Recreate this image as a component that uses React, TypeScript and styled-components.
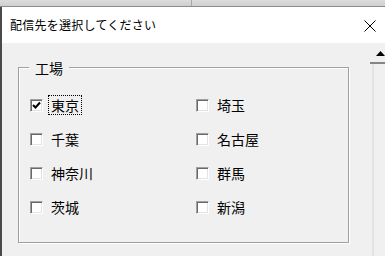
import React from "react";
import styled, { createGlobalStyle } from "styled-components";

const GlobalStyle = createGlobalStyle`
    html, body {
        margin: 0;
        padding: 0;
        background: #f0f0f0;
    }
    body {
        font-family: "Noto Sans CJK JP", "Noto Sans", sans-serif;
        color: #000;
    }
`;

const factories = [
    { name: "東京", checked: true, focused: true },
    { name: "埼玉" },
    { name: "千葉" },
    { name: "名古屋" },
    { name: "神奈川" },
    { name: "群馬" },
    { name: "茨城" },
    { name: "新潟" }
];

const App = () => {
    return (
        <>
            <GlobalStyle />
            <Screen>
                <SheetHeader>
                    <ColumnCell width={192} indent={62}>
                        <ColumnLetter>D</ColumnLetter>
                    </ColumnCell>
                    <ColumnCell indent={125}>
                        <ColumnLetter>E</ColumnLetter>
                    </ColumnCell>
                </SheetHeader>
                <Dialog>
                    <TitleBar>
                        <Title>配信先を選択してください</Title>
                        <CloseButton aria-label="閉じる">
                            <svg width="12" height="12" viewBox="0 0 12 12">
                                <path d="M0.5 0.5 L11.5 11.5 M11.5 0.5 L0.5 11.5" stroke="#000" strokeWidth="1" fill="none" />
                            </svg>
                        </CloseButton>
                    </TitleBar>
                    <Body>
                        <Content>
                            <GroupBox>
                                <Legend>工場</Legend>
                                <Grid>
                                    {factories.map((f) => (
                                        <Option key={f.name}>
                                            <CheckBox>
                                                {f.checked && (
                                                    <svg width="9" height="9" viewBox="0 0 9 9">
                                                        <path d="M1 4 L3.5 6.5 L8 1.5" stroke="#000" strokeWidth="2" fill="none" />
                                                    </svg>
                                                )}
                                            </CheckBox>
                                            <Label focused={f.focused}>{f.name}</Label>
                                        </Option>
                                    ))}
                                </Grid>
                            </GroupBox>
                        </Content>
                        <ScrollStrip>
                            <ScrollUp>
                                <svg width="9" height="5" viewBox="0 0 9 5">
                                    <path d="M0 5 L4.5 0 L9 5 Z" fill="#000" />
                                </svg>
                            </ScrollUp>
                            <ScrollTrack />
                        </ScrollStrip>
                    </Body>
                </Dialog>
            </Screen>
        </>
    );
};

const Screen = styled.div`
    width: 385px;
    height: 256px;
    overflow: hidden;
    display: flex;
    flex-direction: column;
`;

const SheetHeader = styled.div`
    height: 6px;
    display: flex;
    background: linear-gradient(#dcdcdc, #cfcfcf);
    border-bottom: 1px solid #8c8c8c;
    overflow: hidden;
`;

const ColumnCell = styled.div<{ width?: number; indent: number }>`
    flex: ${(p) => (p.width ? `0 0 ${p.width}px` : "1")};
    box-sizing: border-box;
    padding-left: ${(p) => p.indent}px;
    border-right: ${(p) => (p.width ? "1px solid #a8a8a8" : "none")};
    overflow: hidden;
`;

const ColumnLetter = styled.span`
    display: block;
    margin-top: -10px;
    font-family: "Liberation Sans", sans-serif;
    font-size: 12px;
    line-height: 13px;
    color: #222;
`;

const Dialog = styled.div`
    flex: 1;
    display: flex;
    flex-direction: column;
    border-left: 2px solid #4a4a4a;
`;

const TitleBar = styled.div`
    height: 36px;
    flex: 0 0 36px;
    background: #fff;
    display: flex;
    align-items: center;
    justify-content: space-between;
    padding-left: 8px;
`;

const Title = styled.div`
    font-size: 12px;
    letter-spacing: 0.25px;
    line-height: 16px;
    color: #000;
`;

const CloseButton = styled.div`
    display: flex;
    align-items: center;
    margin-right: 9px;
    margin-top: 1px;
`;

const Body = styled.div`
    flex: 1;
    display: flex;
    background: #f0f0f0;
`;

const Content = styled.div`
    flex: 1;
    padding: 24px 0 0 16px;
`;

const GroupBox = styled.div`
    position: relative;
    box-sizing: border-box;
    width: 331px;
    height: 176px;
    border: 1px solid #a0a0a0;
    box-shadow: inset 1px 1px 0 #fff, 1px 1px 0 #fff;
    padding: 20px 0 0 11px;
`;

const Legend = styled.div`
    position: absolute;
    top: -9px;
    left: 10px;
    padding: 0 6px;
    background: #f0f0f0;
    font-size: 14px;
    line-height: 18px;
`;

const Grid = styled.div`
    display: grid;
    grid-template-columns: 166px 1fr;
    grid-auto-rows: 34px;
`;

const Option = styled.div`
    display: flex;
    align-items: center;
`;

const CheckBox = styled.span`
    box-sizing: border-box;
    width: 13px;
    height: 13px;
    display: flex;
    align-items: center;
    justify-content: center;
    background: #fff;
    border: 1px solid;
    border-color: #a0a0a0 #fff #fff #a0a0a0;
    box-shadow: inset 1px 1px 0 #696969, inset -1px -1px 0 #e3e3e3;
`;

const Label = styled.span<{ focused?: boolean }>`
    margin-left: 5px;
    padding: 0 2px;
    font-size: 14px;
    line-height: 18px;
    border: 1px dotted ${(p) => (p.focused ? "#000" : "transparent")};
`;

const ScrollStrip = styled.div`
    flex: 0 0 15px;
    display: flex;
    flex-direction: column;
`;

const ScrollUp = styled.div`
    height: 18px;
    display: flex;
    align-items: center;
    justify-content: flex-end;
    border-bottom: 2px solid #858585;
    padding-top: 1px;
`;

const ScrollTrack = styled.div`
    flex: 1;
    margin-left: 2px;
    border-left: 2px solid #e2e2e2;
`;

export default App;
